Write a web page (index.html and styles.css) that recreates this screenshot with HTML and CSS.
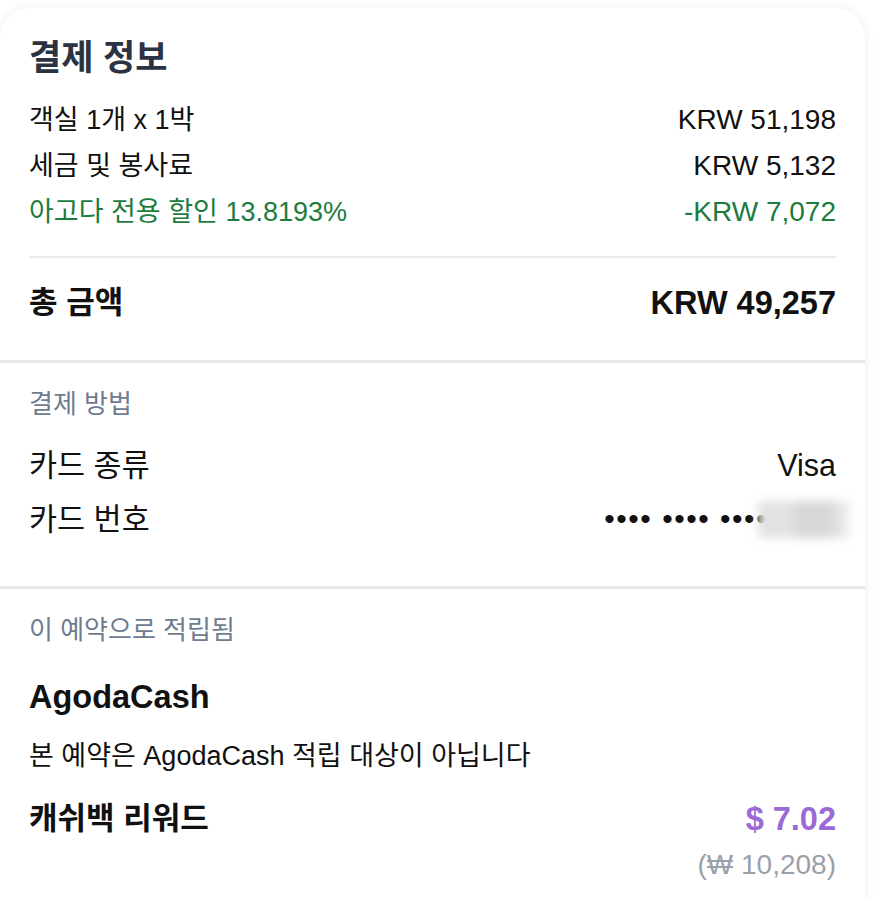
FILE: index.html
```html
<!DOCTYPE html>
<html lang="ko">
<head>
    <meta charset="UTF-8">
    <meta name="viewport" content="width=device-width, initial-scale=1.0">
    <title>결제 정보</title>
    <link rel="stylesheet" href="styles.css">
</head>
<body>
    <div class="card">
        <section class="section summary">
            <h2 class="title">결제 정보</h2>
            <div class="row">
                <span class="label">객실 1개 x 1박</span>
                <span class="amount">KRW 51,198</span>
            </div>
            <div class="row">
                <span class="label">세금 및 봉사료</span>
                <span class="amount">KRW 5,132</span>
            </div>
            <div class="row discount">
                <span class="label">아고다 전용 할인 13.8193%</span>
                <span class="amount">-KRW 7,072</span>
            </div>
            <hr class="divider">
            <div class="row total">
                <span class="label">총 금액</span>
                <span class="amount">KRW 49,257</span>
            </div>
        </section>

        <section class="section payment">
            <div class="caption">결제 방법</div>
            <div class="row big">
                <span class="label">카드 종류</span>
                <span class="amount">Visa</span>
            </div>
            <div class="row big">
                <span class="label">카드 번호</span>
                <span class="card-number">&bull;&bull;&bull;&bull; &bull;&bull;&bull;&bull; &bull;&bull;&bull;&bull;<span class="masked"></span></span>
            </div>
        </section>

        <section class="section rewards">
            <div class="caption">이 예약으로 적립됨</div>
            <h3 class="heading">AgodaCash</h3>
            <p class="note">본 예약은 AgodaCash 적립 대상이 아닙니다</p>
            <div class="cashback">
                <h3 class="heading">캐쉬백 리워드</h3>
                <div class="cashback-value">
                    <span class="usd">$ 7.02</span>
                    <span class="krw">(₩ 10,208)</span>
                </div>
            </div>
        </section>
    </div>
</body>
</html>
```

FILE: styles.css
```css
body {
    margin: 0;
    padding: 8px 0 0 0;
    background-color: #ffffff;
    font-family: "Liberation Sans", "Noto Sans CJK KR", sans-serif;
    color: #111111;
    overflow: hidden;
}

.card {
    width: 865px;
    background-color: #ffffff;
    border-radius: 30px 30px 0 0;
    box-shadow: 0 0 12px rgba(0, 0, 0, 0.07);
}

.section {
    padding: 0 29px;
}

.section + .section {
    border-top: 3px solid #e8e8ec;
}

.summary {
    padding-top: 30px;
    padding-bottom: 34px;
}

.title {
    margin: 0 0 19px 0;
    font-size: 35px;
    line-height: 40px;
    font-weight: 600;
    color: #2b3342;
}

.row {
    display: flex;
    justify-content: space-between;
    align-items: center;
    font-size: 27px;
    line-height: 46px;
}

.row .amount {
    font-size: 28px;
}

.discount {
    color: #1c7c3e;
}

.divider {
    border: 0;
    height: 2px;
    background-color: #e9e9ee;
    margin: 21px 0 22px 0;
}

.total {
    font-weight: 700;
    font-size: 31px;
}

.total .amount {
    font-size: 32.5px;
}

.payment {
    padding-top: 23px;
    padding-bottom: 40px;
}

.caption {
    font-size: 26px;
    line-height: 36px;
    color: #6e7b90;
}

.payment .caption {
    margin-bottom: 16px;
}

.row.big {
    font-size: 30.5px;
    line-height: 54px;
}

.row.big .amount {
    font-size: 30.5px;
}

.card-number {
    display: flex;
    align-items: center;
    font-size: 30px;
    letter-spacing: 1.5px;
    margin-right: -14px;
}

.masked {
    display: inline-block;
    width: 92px;
    height: 37px;
    margin-left: -10px;
    background: linear-gradient(90deg, #e2e2e2 0, #e2e2e2 40%, #d7d7d7 40%, #d7d7d7 78%, #f2f2f2 100%);
    filter: blur(5px);
}

.rewards {
    padding-top: 23px;
    padding-bottom: 20px;
}

.heading {
    margin: 0;
    font-size: 32.5px;
    line-height: 40px;
    font-weight: 700;
}

.rewards > .heading {
    margin-top: 29px;
}

.note {
    margin: 19px 0 0 0;
    font-size: 27px;
    line-height: 40px;
}

.cashback {
    display: flex;
    justify-content: space-between;
    align-items: flex-start;
    margin-top: 23px;
}

.cashback .heading {
    font-size: 31px;
}

.cashback-value {
    display: flex;
    flex-direction: column;
    align-items: flex-end;
}

.usd {
    font-size: 32.5px;
    line-height: 40px;
    font-weight: 700;
    color: #9a6bd6;
}

.krw {
    margin-top: 8px;
    font-size: 28px;
    line-height: 36px;
    color: #9aa0a9;
}
```
